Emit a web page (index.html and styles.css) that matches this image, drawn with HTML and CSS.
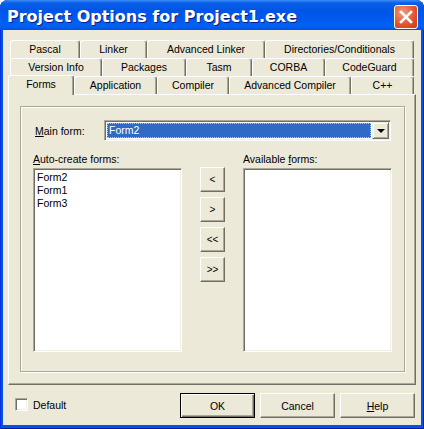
FILE: index.html
```html
<!DOCTYPE html>
<html lang="en">
<head>
  <meta charset="UTF-8" />
  <title>Project Options</title>
  <link rel="stylesheet" href="styles.css">
</head>
<body>
  <div class="window">
    <div class="titlebar">
      <span class="title">Project Options for Project1.exe</span>
      <div class="close">
        <svg width="14" height="14" viewBox="0 0 14 14">
          <path d="M2 2 L12 12 M12 2 L2 12" stroke="#fff" stroke-width="2.6" stroke-linecap="square" />
        </svg>
      </div>
    </div>

    <div class="client">
      <!-- Tab strip, three rows -->
      <div class="tabs">
        <div class="tab-row">
          <div class="tab" style="width:70px">Pascal</div>
          <div class="tab" style="width:67px">Linker</div>
          <div class="tab" style="width:118px">Advanced Linker</div>
          <div class="tab" style="width:149px">Directories/Conditionals</div>
        </div>
        <div class="tab-row">
          <div class="tab" style="width:92px">Version Info</div>
          <div class="tab" style="width:84px">Packages</div>
          <div class="tab" style="width:66px">Tasm</div>
          <div class="tab" style="width:73px">CORBA</div>
          <div class="tab" style="width:89px">CodeGuard</div>
        </div>
        <div class="tab-row front">
          <div class="tab active" style="width:66px">Forms</div>
          <div class="tab" style="width:83px">Application</div>
          <div class="tab" style="width:72px">Compiler</div>
          <div class="tab" style="width:122px">Advanced Compiler</div>
          <div class="tab" style="width:63px">C++</div>
        </div>
      </div>

      <div class="page">
        <div class="frame">
          <div class="main-row">
            <label class="main-label"><u>M</u>ain form:</label>
            <div class="combo">
              <div class="combo-value">Form2</div>
              <div class="combo-btn"><span class="arrow"></span></div>
            </div>
          </div>

          <div class="forms-grid">
            <div class="grid-label"><u>A</u>uto-create forms:</div>
            <div></div>
            <div class="grid-label">Available <u>f</u>orms:</div>

            <div class="list">
              <div class="item">Form2</div>
              <div class="item">Form1</div>
              <div class="item">Form3</div>
            </div>
            <div class="move-buttons">
              <div class="btn small">&lt;</div>
              <div class="btn small">&gt;</div>
              <div class="btn small">&lt;&lt;</div>
              <div class="btn small">&gt;&gt;</div>
            </div>
            <div class="list"></div>
          </div>
        </div>
      </div>

      <div class="bottom-bar">
        <div class="check-row">
          <span class="checkbox"></span>
          <span>Default</span>
        </div>
        <div class="dialog-buttons">
          <div class="btn default">OK</div>
          <div class="btn">Cancel</div>
          <div class="btn"><u>H</u>elp</div>
        </div>
      </div>
    </div>
  </div>
</body>
</html>
```

FILE: styles.css
```css
/* Global */
* {
  box-sizing: border-box;
}
body {
  margin: 0;
  background: #fff;
  font-family: "Liberation Sans", Arial, sans-serif;
  font-size: 10.5px;
  color: #000;
}
.window {
  width: 424px;
  height: 429px;
  background: #0054e3;
  border-radius: 8px 8px 0 0;
  display: flex;
  flex-direction: column;
  overflow: hidden;
  box-shadow: inset 1px 0 #0831d9, inset -1px 0 #001ea0, inset 0 -1px #001ea0;
}
/* Title bar */
.titlebar {
  height: 30px;
  flex: none;
  display: flex;
  align-items: center;
  padding: 0 6px 0 7px;
  background: linear-gradient(#3c8cf8 0, #0a5fe8 3px, #0055e5 10px, #0058ee 18px, #0062f6 26px, #0050df 30px);
}
.title {
  flex: 1;
  color: #fff;
  font-family: "DejaVu Sans", sans-serif;
  font-weight: bold;
  font-size: 16px;
  text-shadow: 1px 1px #0a1e8c;
  margin-top: 2px;
}
.close {
  width: 24px;
  height: 24px;
  align-self: flex-start;
  margin-top: 5px;
  border: 1px solid #fff;
  border-radius: 3px;
  background: radial-gradient(circle at 35% 30%, #f09a7c, #e2512b 60%, #c73c18);
  display: flex;
  align-items: center;
  justify-content: center;
}
/* Client area */
.client {
  flex: 1;
  margin: 0 3px 4px 3px;
  background: #ece9d8;
  padding: 10px 6px 0 5px;
  display: flex;
  flex-direction: column;
}
/* Tabs */
.tab-row {
  display: flex;
  height: 18px;
  margin-left: 2px;
}
.tab-row.front {
  margin-left: 0;
  align-items: flex-end;
  position: relative;
  z-index: 2;
}
.tab {
  flex: none;
  height: 18px;
  background: #ece9d8;
  border: 1px solid #fff;
  border-bottom: none;
  border-right-color: #716f64;
  box-shadow: inset -1px 0 #aca899;
  border-radius: 3px 3px 0 0;
  text-align: center;
  line-height: 16px;
  white-space: nowrap;
}
.tab.active {
  height: 20px;
  margin-bottom: -1px;
  line-height: 16px;
}
.page {
  width: 408px;
  height: 291px;
  flex: none;
  border: 1px solid;
  border-color: #fff #716f64 #716f64 #fff;
  box-shadow: inset -1px -1px #aca899;
  padding: 11px;
}
/* Etched group frame */
.frame {
  width: 385px;
  height: 266px;
  border: 1px solid #aca899;
  box-shadow: inset 1px 1px #fff, 1px 1px #fff;
  padding: 13px 12px 0 12px;
}
.main-row {
  display: flex;
  align-items: center;
  height: 21px;
}
.main-label {
  width: 71px;
  padding-left: 2px;
}
.combo {
  width: 287px;
  height: 21px;
  display: flex;
  background: #fff;
  border: 1px solid;
  border-color: #aca899 #fff #fff #aca899;
  box-shadow: inset 1px 1px #716f64, inset -1px -1px #f1efe2;
  padding: 1px;
}
.combo-value {
  flex: 1;
  margin: 1px;
  background: #316ac5;
  color: #fff;
  border: 1px dotted #e8c27a;
  line-height: 13px;
  padding-left: 1px;
}
.combo-btn {
  width: 17px;
  height: 17px;
  background: #ece9d8;
  border: 1px solid;
  border-color: #f1efe2 #716f64 #716f64 #f1efe2;
  box-shadow: inset 1px 1px #fff, inset -1px -1px #aca899;
  display: flex;
  align-items: center;
  justify-content: center;
}
.arrow {
  width: 0;
  height: 0;
  border-left: 4px solid transparent;
  border-right: 4px solid transparent;
  border-top: 4px solid #000;
  margin-top: 1px;
}
/* Forms lists */
.forms-grid {
  display: grid;
  grid-template-columns: 149px 25px 149px;
  grid-template-rows: 15px 184px;
  column-gap: 18px;
  margin-top: 12px;
}
.grid-label {
  line-height: 13px;
}
.list {
  background: #fff;
  border: 1px solid;
  border-color: #aca899 #fff #fff #aca899;
  box-shadow: inset 1px 1px #716f64, inset -1px -1px #f1efe2;
  padding: 2px 3px;
}
.item {
  line-height: 13px;
}
.move-buttons {
  display: flex;
  flex-direction: column;
  gap: 5px;
  margin-top: -1px;
}
/* Buttons */
.btn {
  width: 75px;
  height: 25px;
  background: #ece9d8;
  border: 1px solid;
  border-color: #fff #716f64 #716f64 #fff;
  box-shadow: inset -1px -1px #aca899;
  display: flex;
  align-items: center;
  justify-content: center;
}
.btn.small {
  width: 25px;
  height: 25px;
  font-size: 10px;
  padding-bottom: 1px;
}
.btn.default {
  border: 1px solid #000;
  box-shadow: inset 1px 1px #fff, inset -1px -1px #716f64, inset -2px -2px #aca899;
}
/* Bottom bar */
.bottom-bar {
  flex: 1;
  display: flex;
  align-items: flex-start;
  padding: 8px 0 0 7px;
}
.check-row {
  display: flex;
  align-items: center;
  gap: 5px;
  margin-top: 5px;
}
.checkbox {
  width: 13px;
  height: 13px;
  background: #fff;
  border: 1px solid;
  border-color: #aca899 #fff #fff #aca899;
  box-shadow: inset 1px 1px #716f64, inset -1px -1px #f1efe2;
}
.dialog-buttons {
  margin-left: auto;
  display: flex;
  gap: 5px;
}
```
